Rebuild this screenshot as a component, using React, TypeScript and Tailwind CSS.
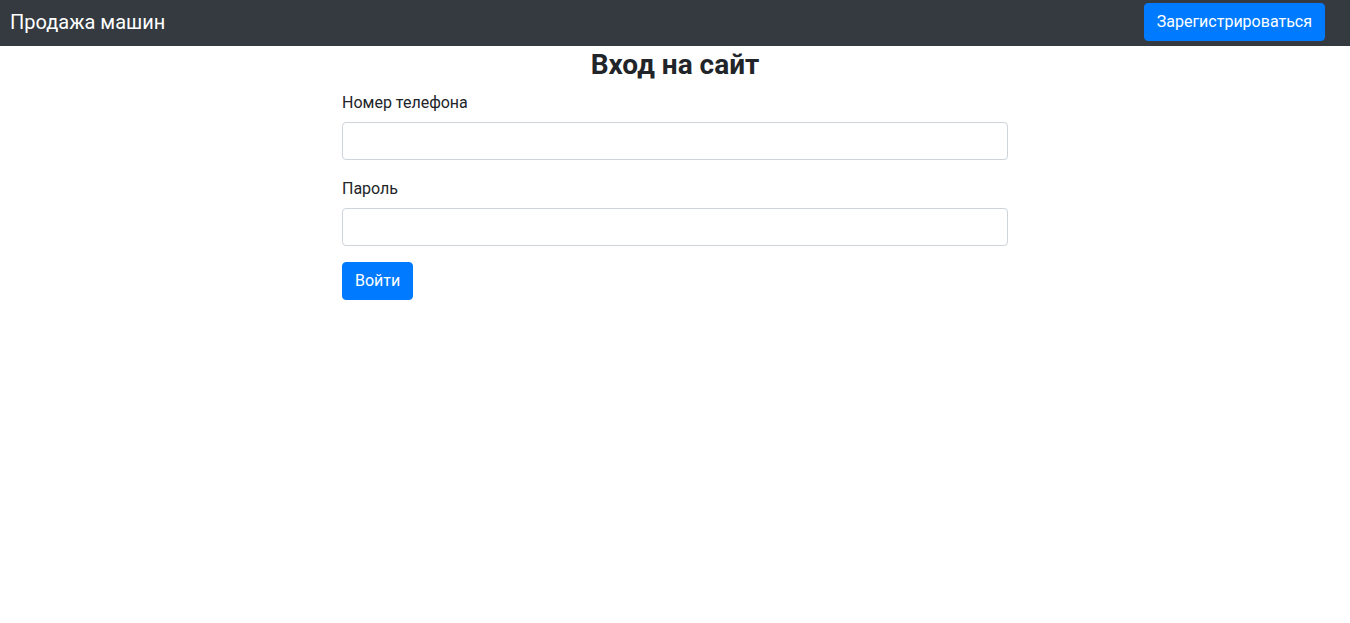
export default function App() {
  return (
    <div className="min-h-screen bg-white font-['Roboto','Liberation_Sans',sans-serif] text-[#212529]">
      <nav className="flex h-[46px] items-start justify-between bg-[#343a40] pl-[10px] pr-[25px]">
        <a href="#" className="mt-[10px] text-[20px] leading-[25px] text-white">
          Продажа машин
        </a>
        <button
          type="button"
          className="mt-[3px] h-[38px] rounded-[4px] border border-[#007bff] bg-[#007bff] px-3 text-[16px] leading-6 text-white"
        >
          Зарегистрироваться
        </button>
      </nav>

      <main className="mx-auto w-[666px]">
        <h3 className="mb-2 pt-[2px] text-center text-[28px] font-bold leading-[34px]">
          Вход на сайт
        </h3>
        <form onSubmit={(e) => e.preventDefault()}>
          <div className="mb-4">
            <label className="mb-2 block pt-[1px] text-[16px] leading-6">Номер телефона</label>
            <input
              type="text"
              className="-mt-[1px] block h-[38px] w-full rounded-[4px] border border-[#ced4da] px-3 outline-none"
            />
          </div>
          <div className="mb-4">
            <label className="mb-2 block pt-[1px] text-[16px] leading-6">Пароль</label>
            <input
              type="password"
              className="-mt-[1px] block h-[38px] w-full rounded-[4px] border border-[#ced4da] px-3 outline-none"
            />
          </div>
          <button
            type="submit"
            className="h-[38px] rounded-[4px] border border-[#007bff] bg-[#007bff] px-3 text-[16px] leading-6 text-white"
          >
            Войти
          </button>
        </form>
      </main>
    </div>
  );
}
